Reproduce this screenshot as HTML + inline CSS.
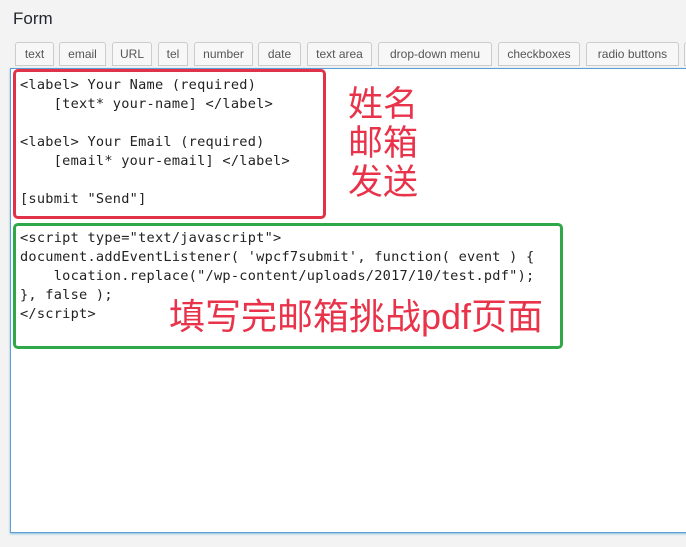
<!DOCTYPE html>
<html><head><meta charset="utf-8"><style>
body{margin:0;width:686px;height:547px;background:#f3f3f3;position:relative;overflow:hidden;font-family:"Liberation Sans",sans-serif}
.t{position:absolute;left:13px;top:9px;font-size:17px;color:#23282d}
.b{position:absolute;top:42px;height:24px;box-sizing:border-box;border:1px solid #ccc;background:#f7f7f7;font-size:12px;color:#555;line-height:22px;text-align:center;border-radius:3px 3px 0 0}
.ta{position:absolute;left:10px;top:68px;width:700px;height:465px;box-sizing:border-box;background:#fff;border:1px solid #5b9dd9;box-shadow:0 1px 2px rgba(30,140,190,.5)}
.code{position:absolute;left:20px;font-family:"DejaVu Sans Mono","Liberation Mono",monospace;font-size:13.6px;line-height:19px;color:#222;white-space:pre;letter-spacing:0.25px}
.box{position:absolute;border-radius:5px;box-sizing:border-box}
.cn{position:absolute;color:#e8334a;font-family:"Noto Sans CJK SC",sans-serif}
</style></head><body>
<div class="t">Form</div>
<div class="b" style="left:15px;width:39px">text</div>
<div class="b" style="left:59px;width:47px">email</div>
<div class="b" style="left:112px;width:40px">URL</div>
<div class="b" style="left:158px;width:30px">tel</div>
<div class="b" style="left:194px;width:59px">number</div>
<div class="b" style="left:258px;width:43px">date</div>
<div class="b" style="left:307px;width:65px">text area</div>
<div class="b" style="left:378px;width:114px">drop-down menu</div>
<div class="b" style="left:498px;width:82px">checkboxes</div>
<div class="b" style="left:586px;width:93px">radio buttons</div>
<div class="b" style="left:684px;width:20px"></div>
<div class="ta"></div>
<div class="code" style="top:76px">&lt;label&gt; Your Name (required)
    [text* your-name] &lt;/label&gt;

&lt;label&gt; Your Email (required)
    [email* your-email] &lt;/label&gt;

[submit "Send"]</div>
<div class="code" style="top:229px">&lt;script type="text/javascript"&gt;
document.addEventListener( 'wpcf7submit', function( event ) {
    location.replace("/wp-content/uploads/2017/10/test.pdf");
}, false );
&lt;/script&gt;</div>
<div class="box" style="left:13px;top:69px;width:313px;height:150px;border:3px solid #e0334a"></div>
<div class="box" style="left:13px;top:223px;width:550px;height:126px;border:3px solid #2fa84a"></div>
<div class="cn" style="left:348px;top:82px;font-size:35px;line-height:39px">姓名<br>邮箱<br>发送</div>
<div class="cn" style="left:169px;top:295px;font-size:36px;line-height:44px;font-family:'Liberation Sans','Noto Sans CJK SC',sans-serif">填写完邮箱挑战pdf页面</div>
</body></html>
